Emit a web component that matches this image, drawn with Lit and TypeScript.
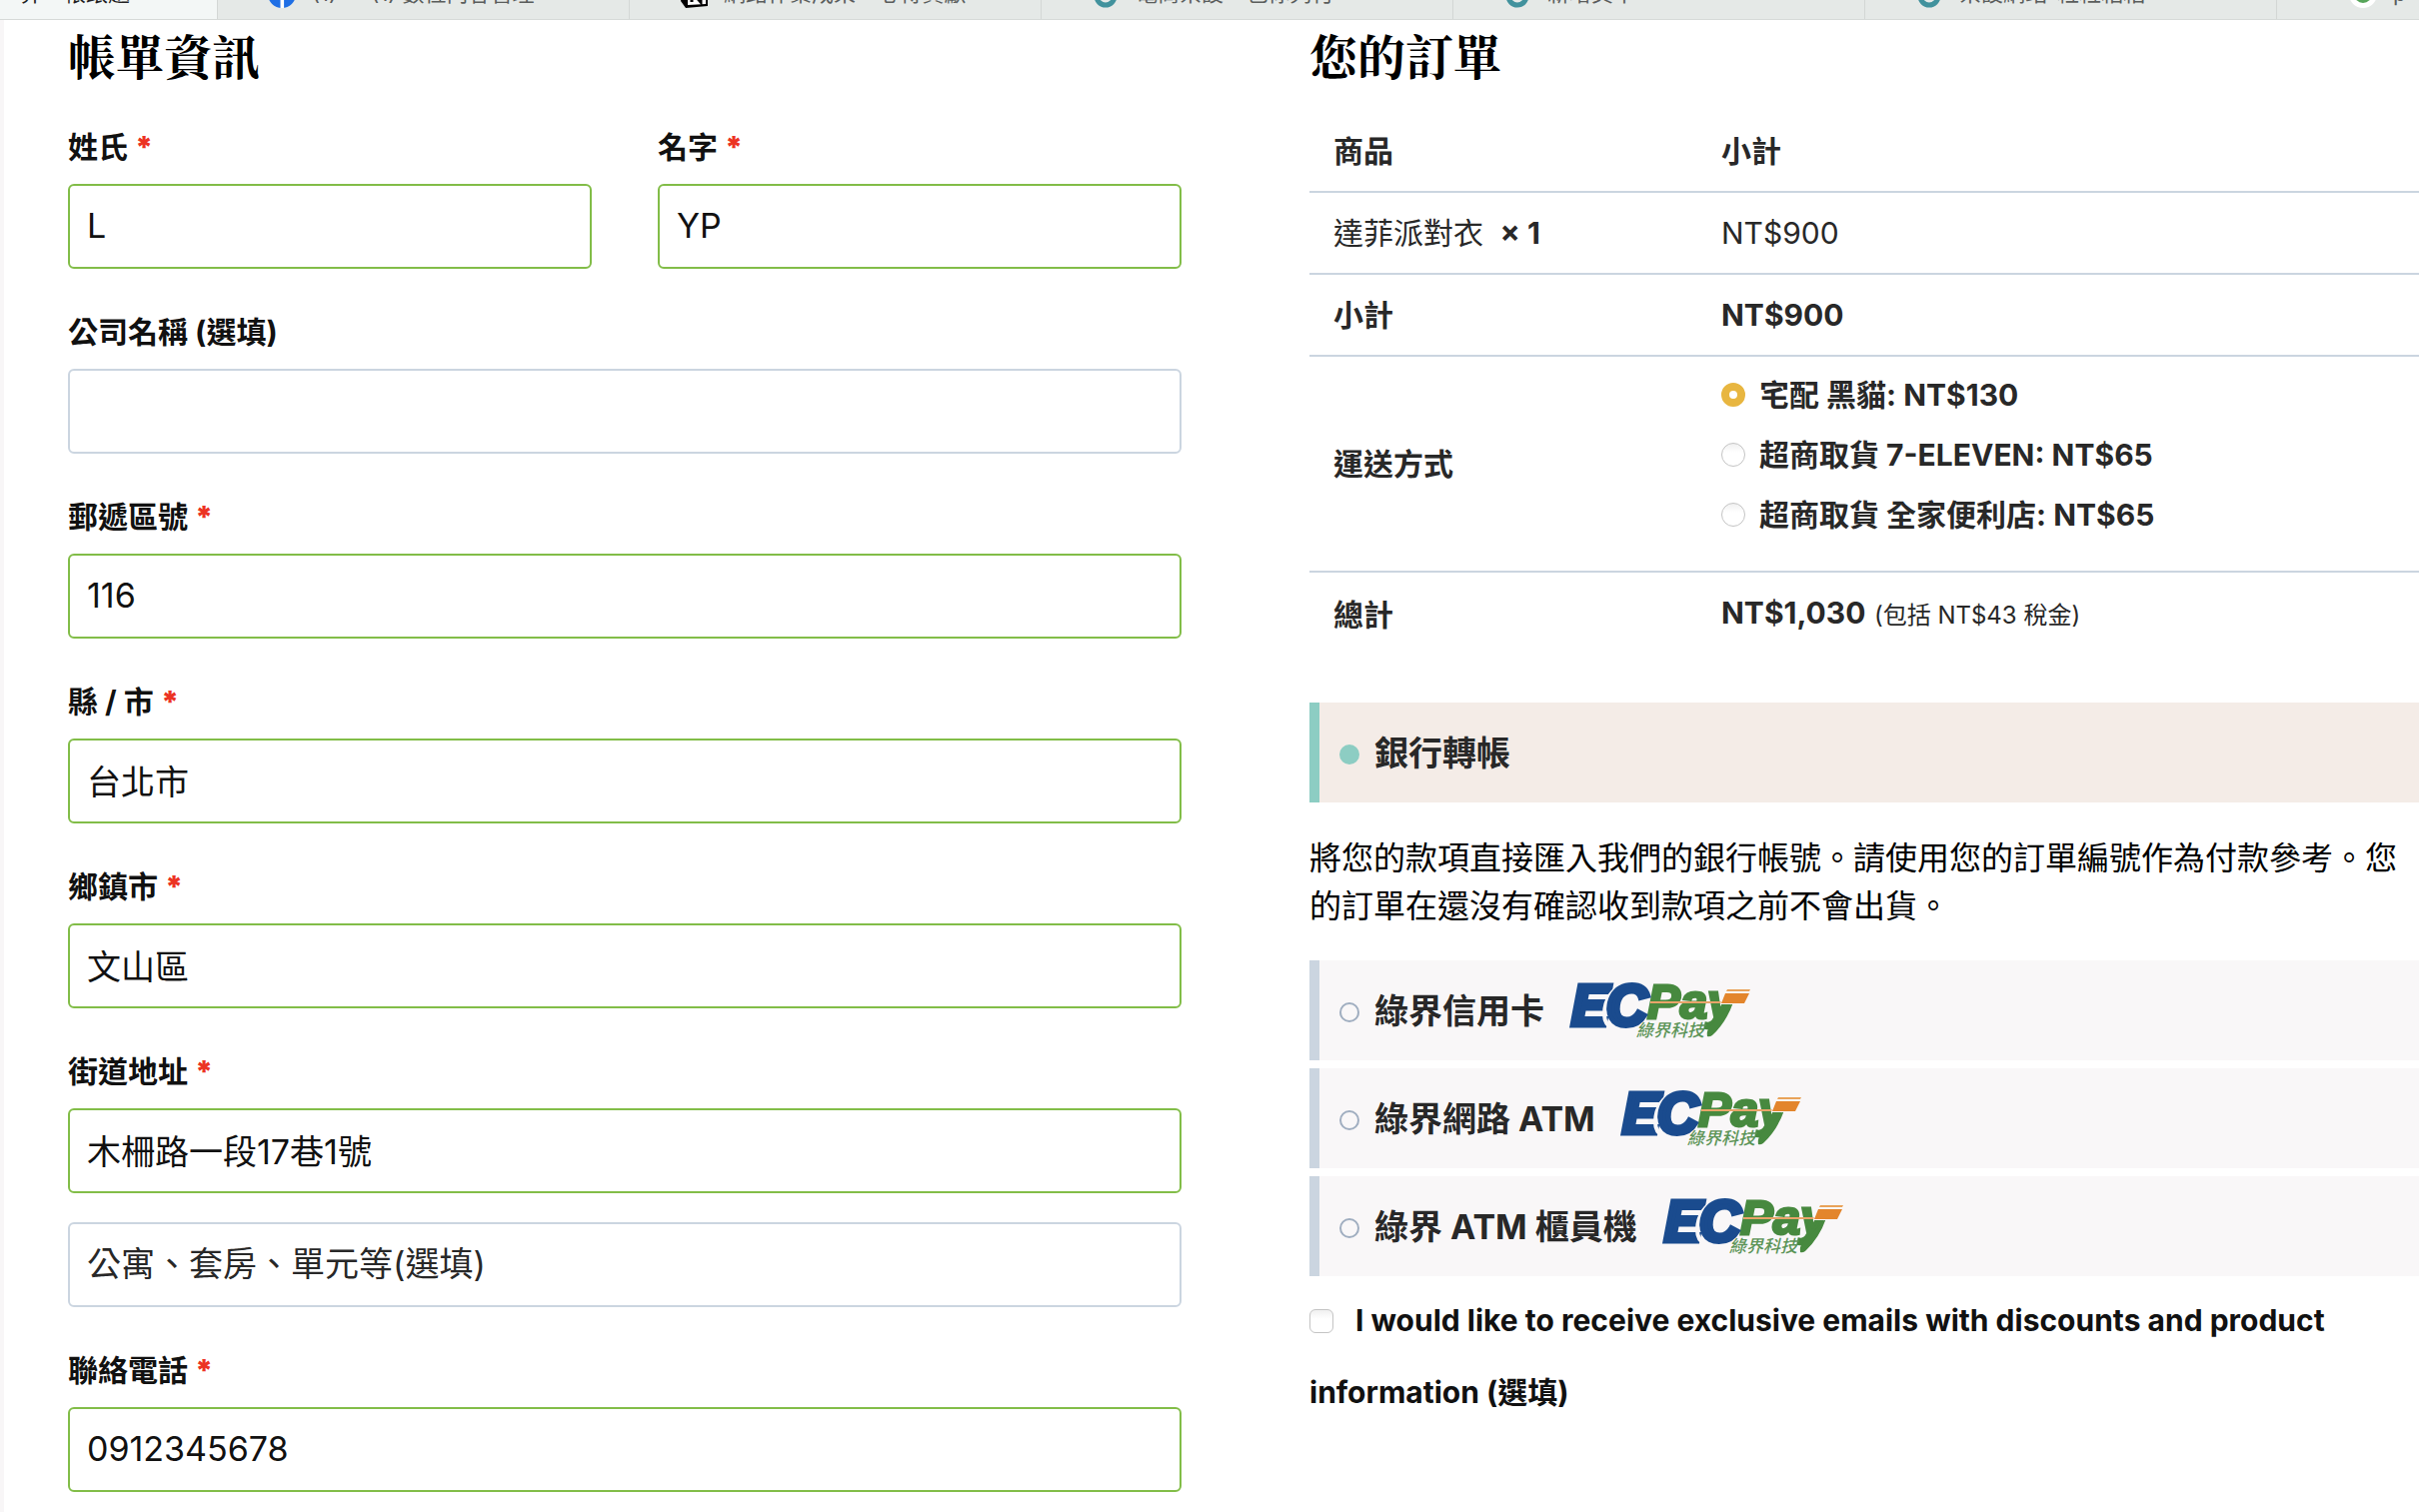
import { LitElement, html, css, svg, nothing } from "lit";
import { customElement, state } from "lit/decorators.js";

interface Field {
  id: string;
  label: string;
  value: string;
  required: boolean;
  half?: boolean;
  extra?: string;
}

const FIELDS: Field[] = [
  { id: "last", label: "姓氏", value: "L", required: true, half: true },
  { id: "first", label: "名字", value: "YP", required: true, half: true },
  { id: "company", label: "公司名稱 (選填)", value: "", required: false },
  { id: "zip", label: "郵遞區號", value: "116", required: true },
  { id: "county", label: "縣 / 市", value: "台北市", required: true },
  { id: "town", label: "鄉鎮市", value: "文山區", required: true },
  { id: "street", label: "街道地址", value: "木柵路一段17巷1號", required: true, extra: "公寓、套房、單元等(選填)" },
  { id: "phone", label: "聯絡電話", value: "0912345678", required: true },
];

const TABS = [
  { icon: "none", title: "算一帳跟題" },
  { icon: "facebook", title: "(1) — (1) 數位內容管理" },
  { icon: "notion", title: "網路作業成果 - 心得貢獻" },
  { icon: "ring", title: "電商架設 - 包你夠付" },
  { icon: "ring", title: "新增頁本" },
  { icon: "ring", title: "架設網站-粒粒粘粘" },
  { icon: "chrome", title: "p" },
];

const SHIPPING = ["宅配 黑貓: NT$130", "超商取貨 7-ELEVEN: NT$65", "超商取貨 全家便利店: NT$65"];
const PAYMENTS = ["綠界信用卡", "綠界網路 ATM", "綠界 ATM 櫃員機"];

const tabIcon = (kind: string) => {
  switch (kind) {
    case "facebook":
      return svg`<circle cx="14" cy="14" r="14" fill="#1f6fe5"/><path d="M12.5 28V10h3.6v18z" fill="#fff"/>`;
    case "notion":
      return svg`<path d="M1 3l22-2 5 4v21l-22 2-5-7z" fill="#000"/><path d="M8 8l18-1v17L8 25z" fill="#fff"/><path d="M12 22V12l9 10V12" fill="none" stroke="#000" stroke-width="3"/>`;
    case "ring":
      return svg`<circle cx="14" cy="16" r="9" fill="none" stroke="#41929d" stroke-width="5"/>`;
    default:
      return svg`<circle cx="14" cy="14" r="14" fill="#fff"/><circle cx="14" cy="14" r="9" fill="#57a55a"/><circle cx="14" cy="12" r="5" fill="#4b86e8"/>`;
  }
};

const ecpayLogo = html`
  <svg class="logo" viewBox="0 0 180 56" role="img" aria-label="ECPay 綠界科技">
    <g font-family="Liberation Sans, Arial, sans-serif" font-style="italic" font-weight="700">
      <text x="77" y="36" font-size="49" fill="#47893f" stroke="#47893f" stroke-width="3">Pay</text>
      <path d="M150 34L163 20Q156 40 142 53q-3 2-5 1-1-6 3-10z" fill="#47893f"/>
      <text x="1" y="43" font-size="57" fill="#1a4b8e" stroke="#1a4b8e" stroke-width="5">E</text>
      <path d="M56 0Q34 10 34 32q0 10 8 14" fill="none" stroke="#f9f7f8" stroke-width="4"/>
      <text x="36" y="43" font-size="57" fill="#1a4b8e" stroke="#1a4b8e" stroke-width="5">C</text>
    </g>
    <path d="M80 20h73" stroke="#e8a469" stroke-width="2"/>
    <path d="M154 5h27l-7 17h-24z" fill="#f9f7f8"/>
    <path d="M157 7h23l-1 2h-23z" fill="#e9a35a"/>
    <path d="M155 11h24l-5 10h-23z" fill="#e3852c"/>
    <text x="66" y="54" font-family="Noto Sans CJK TC, sans-serif" font-size="17" font-weight="500" font-style="italic" fill="#5c9457">綠界科技</text>
  </svg>
`;

@customElement("app-root")
export class AppRoot extends LitElement {
  @state() private shipping = 0;
  @state() private payment = -1;

  static styles = css`
    :host {
      display: block;
      min-height: 100vh;
      overflow: hidden;
      background: #fff;
      color: #282828;
      font-family: Inter, "Noto Sans CJK TC", sans-serif;
      font-size: 30px;
    }
    *, *::before, *::after { box-sizing: border-box; }

    .tabs {
      display: grid;
      grid-template-columns: 218px repeat(5, 412px) 1fr;
      height: 20px;
      border-bottom: 1px solid #d6dad8;
      background: #e5e9e7;
      overflow: hidden;
    }
    .tab {
      display: flex;
      align-items: flex-end;
      gap: 16px;
      height: 19px;
      padding: 0 0 11px 50px;
      box-shadow: inset -1px 0 #d3d7d5;
      color: #5a5d5c;
      font-size: 22px;
      line-height: 30px;
      white-space: nowrap;
      text-decoration: none;
      overflow: hidden;
    }
    .tab.active { padding-left: 20px; background: #f3f7f6; color: #222; }
    .tab:last-child { box-shadow: none; padding-left: 72px; }
    .tab-icon { flex: none; width: 28px; height: 28px; }

    .page {
      display: grid;
      grid-template-columns: 1114fr 1110fr;
      gap: 128px;
      border-left: 4px solid #f8f6f7;
      padding: 1px 0 0 64px;
    }
    h2 {
      margin: 0;
      color: #000;
      font-family: "Noto Serif CJK TC", "Noto Serif TC", "Noto Sans CJK TC", serif;
      font-size: 48px;
      font-weight: 700;
      line-height: 68px;
    }

    .form { display: grid; grid-template-columns: 1fr 1fr; column-gap: 66px; }
    .form h2 { grid-column: span 2; margin-bottom: 29px; }
    .field { grid-column: span 2; display: flex; flex-direction: column; padding-bottom: 34px; }
    .field.half { grid-column: span 1; }
    .field label { padding: 7px 0 15px; color: #111; font-weight: 700; line-height: 44px; }
    .star { color: #ec3323; font-weight: 900; }
    .box {
      width: 100%;
      height: 85px;
      border: 2px solid #cbd5e0;
      border-radius: 6px;
      padding: 0 17px 2px;
      background: #fff;
      color: #111;
      font: inherit;
      font-size: 34px;
    }
    .box.valid { border-color: #82bd48; }
    .box::placeholder { color: #282828; opacity: 1; }
    .extra { margin-top: 29px; }

    .order h2 { margin-bottom: 22px; }
    table { width: 100%; border-collapse: separate; border-spacing: 0; }
    th, td { padding: 0 24px; text-align: left; line-height: 80px; }
    th:first-child, td:first-child { width: 412px; padding-right: 0; }
    td { padding-left: 0; }
    td:first-child { padding-left: 24px; }
    th + th { padding-left: 0; }
    tr:not(:last-child) > * { border-bottom: 2px solid #cbd5e0; }
    .qty { margin-left: 8px; }
    small { font-size: 24px; font-weight: 400; }
    .methods { display: flex; flex-direction: column; padding: 8px 0 26px; }
    .method { display: flex; align-items: center; gap: 14px; font-weight: 700; line-height: 60px; }
    .radio, .check {
      appearance: none;
      flex: none;
      width: 24px;
      height: 24px;
      margin: 0;
      border: 1px solid #c4c4c4;
      border-radius: 50%;
      background: linear-gradient(#f0f0f0, #fff 40%);
    }
    .radio:checked { border: 8px solid #e8b640; background: #fff; }

    .payments { margin-top: 47px; }
    .pay {
      display: flex;
      align-items: center;
      height: 100px;
      margin-bottom: 8px;
      border-left: 10px solid #cbd5e0;
      padding-left: 20px;
      background: #f9f7f8;
      font-size: 34px;
      font-weight: 700;
    }
    .pay span { padding-bottom: 4px; }
    .pay.open { margin-bottom: 0; border-color: #8dcdc3; background: #f4ece7; }
    .dot {
      appearance: none;
      flex: none;
      width: 20px;
      height: 20px;
      margin: 4px 15px 0 0;
      border: 2px solid #a0aec0;
      border-radius: 50%;
    }
    .dot:checked { border-color: #8dcdc3; background: #8dcdc3; }
    .logo { flex: none; width: 180px; height: 56px; margin-left: 26px; overflow: visible; }
    .note { margin: 0; padding: 32px 0 30px; color: #000; font-size: 32px; line-height: 48px; }
    .news { display: block; color: #111; font-weight: 700; line-height: 72px; }
    .check { border-radius: 6px; margin-right: 22px; vertical-align: -2px; }
  `;

  private renderField(f: Field) {
    return html`
      <div class="field ${f.half ? "half" : ""}">
        <label for=${f.id}>${f.label}${f.required ? html` <span class="star">*</span>` : nothing}</label>
        <input class="box ${f.required ? "valid" : ""}" id=${f.id} type="text" .value=${f.value} />
        ${f.extra
          ? html`<input class="box extra" type="text" aria-label=${f.extra} placeholder=${f.extra} />`
          : nothing}
      </div>
    `;
  }

  render() {
    return html`
      <nav class="tabs">
        ${TABS.map(
          (t, i) => html`<a class="tab ${i === 0 ? "active" : ""}" href="#">
            ${t.icon === "none" ? nothing : html`<svg class="tab-icon" viewBox="0 0 28 28">${tabIcon(t.icon)}</svg>`}
            <span>${t.title}</span>
          </a>`
        )}
      </nav>
      <main class="page">
        <form class="form">
          <h2>帳單資訊</h2>
          ${FIELDS.map((f) => this.renderField(f))}
        </form>
        <section class="order">
          <h2>您的訂單</h2>
          <table>
            <tbody>
              <tr><th>商品</th><th>小計</th></tr>
              <tr><td>達菲派對衣 <strong class="qty">× 1</strong></td><td>NT$900</td></tr>
              <tr><th>小計</th><td><strong>NT$900</strong></td></tr>
              <tr>
                <th>運送方式</th>
                <td>
                  <div class="methods">
                    ${SHIPPING.map(
                      (s, i) => html`<label class="method">
                        <input class="radio" type="radio" name="shipping" .checked=${this.shipping === i}
                          @change=${() => (this.shipping = i)} />
                        <span>${s}</span>
                      </label>`
                    )}
                  </div>
                </td>
              </tr>
              <tr><th>總計</th><td><strong>NT$1,030</strong> <small>(包括 NT$43 稅金)</small></td></tr>
            </tbody>
          </table>
          <div class="payments">
            <label class="pay open">
              <input class="dot" type="radio" name="payment" .checked=${this.payment === -1}
                @change=${() => (this.payment = -1)} />
              <span>銀行轉帳</span>
            </label>
            <p class="note">將您的款項直接匯入我們的銀行帳號。請使用您的訂單編號作為付款參考。您的訂單在還沒有確認收到款項之前不會出貨。</p>
            ${PAYMENTS.map(
              (p, i) => html`<label class="pay">
                <input class="dot" type="radio" name="payment" .checked=${this.payment === i}
                  @change=${() => (this.payment = i)} />
                <span>${p}</span>
                ${ecpayLogo}
              </label>`
            )}
          </div>
          <label class="news"><input class="check" type="checkbox" />I would like to receive exclusive emails with discounts and product information (選填)</label>
        </section>
      </main>
    `;
  }
}
